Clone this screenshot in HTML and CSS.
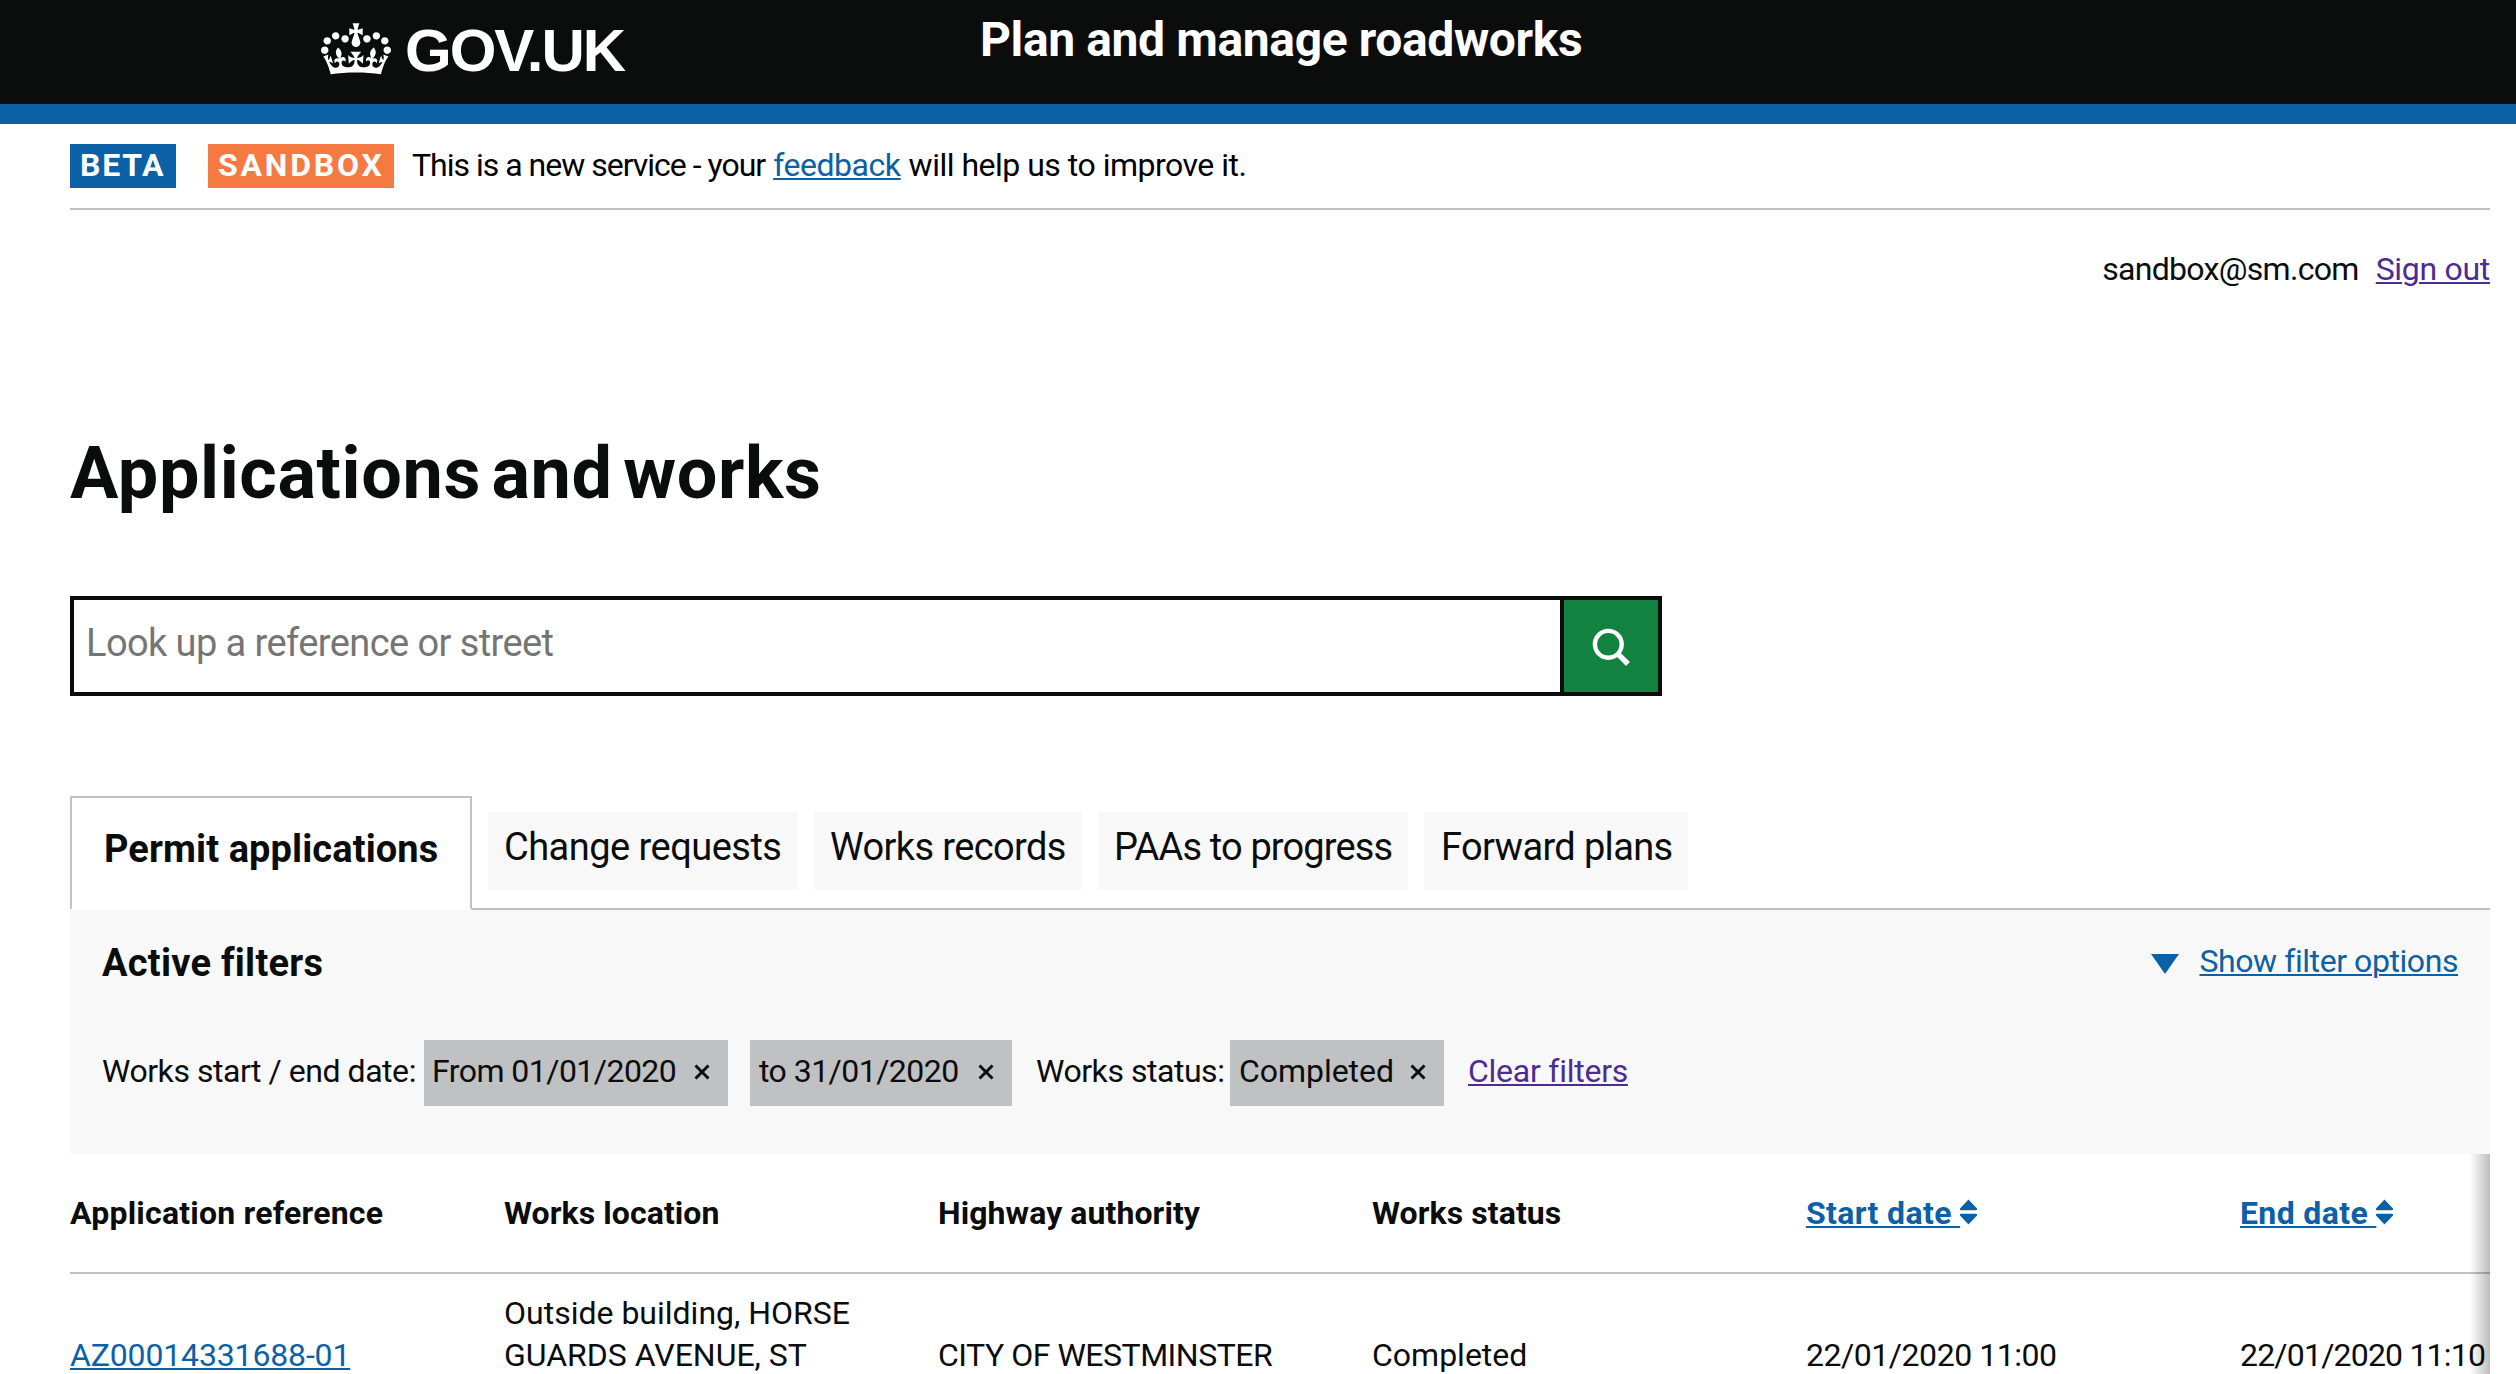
FILE: index.html
```html
<!DOCTYPE html>
<html lang="en">
<head>
<meta charset="utf-8">
<title>Plan and manage roadworks</title>
<link rel="stylesheet" href="styles.css">
</head>
<body>
<header class="header">
  <div class="header__logo">
    <svg class="header__crown" viewBox="0 0 132 97" aria-hidden="true"><path fill="currentColor" fill-rule="evenodd" d="M25 30.2c3.5 1.5 7.7-.2 9.1-3.7 1.5-3.6-.2-7.8-3.9-9.2-3.6-1.4-7.6.3-9.1 3.9-1.4 3.5.3 7.5 3.9 9zM9 39.5c3.6 1.5 7.8-.2 9.2-3.7 1.5-3.6-.2-7.8-3.9-9.1-3.6-1.5-7.6.2-9.1 3.8-1.4 3.5.3 7.5 3.8 9zM4.4 57.2c3.5 1.5 7.7-.2 9.1-3.8 1.5-3.6-.2-7.7-3.9-9.1-3.5-1.5-7.6.3-9.1 3.8-1.4 3.5.3 7.6 3.9 9.1zm38.3-21.4c3.5 1.5 7.7-.2 9.1-3.8 1.5-3.6-.2-7.7-3.9-9.1-3.6-1.5-7.6.3-9.1 3.8-1.3 3.6.4 7.7 3.9 9.1zm64.4-5.6c-3.6 1.5-7.8-.2-9.1-3.7-1.5-3.6.2-7.8 3.8-9.2 3.6-1.4 7.7.3 9.2 3.9 1.3 3.5-.4 7.5-3.9 9zm15.9 9.3c-3.6 1.5-7.7-.2-9.1-3.7-1.5-3.6.2-7.8 3.7-9.1 3.6-1.5 7.7.2 9.2 3.8 1.5 3.5-.3 7.5-3.8 9zm4.7 17.7c-3.6 1.5-7.8-.2-9.2-3.8-1.5-3.6.2-7.7 3.9-9.1 3.6-1.5 7.7.3 9.2 3.8 1.3 3.5-.4 7.6-3.9 9.1zM89.3 35.8c-3.6 1.5-7.8-.2-9.2-3.8-1.4-3.6.2-7.7 3.9-9.1 3.6-1.5 7.7.3 9.2 3.8 1.4 3.6-.3 7.7-3.9 9.1zM69.7 17.7l8.9 4.7V9.3l-8.9 2.8c-.2-.3-.5-.6-.9-.9L72.4 0H59.6l3.5 11.2c-.3.3-.6.5-.9.9l-8.8-2.8v13.1l8.8-4.7c.3.3.6.7.9.9l-5 15.4v.1c-.2.8-.4 1.6-.4 2.4 0 4.1 3.1 7.5 7 8.1h.2c.3 0 .7.1 1 .1.4 0 .7 0 1-.1h.2c4-.6 7.1-4.1 7.1-8.1 0-.8-.1-1.7-.4-2.4V34l-5.1-15.4c.4-.2.7-.6 1-.9zM66 92.8c16.900 0 32.800 1.100 47.100 3.200 4-16.900 8.900-26.700 14-33.500l-9.600-3.400c1 4.900 1.100 7.200 0 10.200-1.500-1.400-3-4.300-4.200-8.700L108.600 76c2.800-2 5-3.200 7.500-3.300-4.400 9.400-10 11.900-13.600 11.200-4.300-.8-6.300-4.600-5.600-7.900 1-4.700 5.700-5.900 8-.5 4.300-8.700-3-11.400-7.600-8.800 7.100-7.200 7.900-13.500 2.100-21.100-8 6.100-8.100 12.300-4.500 20.800-4.700-5.400-12.100-2.500-9.500 6.200 3.400-5.200 7.900-2 7.200 3.100-.6 4.300-6.400 7.800-13.500 7.200-10.300-.9-10.900-8-11.200-13.800 2.500-.5 7.100 1.800 11 7.300L80.200 60c-4.100 4.400-8 5.300-12.300 5.400 1.400-4.400 8-11.600 8-11.600H55.500s6.400 7.200 7.900 11.600c-4.200-.1-8-1-12.300-5.400l1.400 16.400c3.900-5.500 8.500-7.700 10.900-7.300-.3 5.800-.9 12.800-11.100 13.800-7.200.6-12.900-2.900-13.500-7.200-.7-5 3.800-8.300 7.100-3.100 2.700-8.700-4.600-11.600-9.400-6.200 3.700-8.500 3.600-14.700-4.600-20.800-5.800 7.600-5 13.900 2.200 21.100-4.700-2.600-11.900.1-7.700 8.800 2.300-5.500 7.100-4.200 8.100.5.7 3.300-1.300 7.100-5.700 7.900-3.500.7-9-1.800-13.500-11.200 2.500.1 4.700 1.300 7.500 3.300l-4.700-15.400c-1.200 4.400-2.700 7.200-4.300 8.700-1.100-3-.9-5.300 0-10.200l-9.500 3.400c5 6.900 9.900 16.700 14 33.500 14.800-2.100 30.800-3.200 47.700-3.200z"/></svg>
    <span class="header__wordmark">GOV.UK</span>
  </div>
  <div class="header__service">Plan and manage roadworks</div>
</header>

<div class="page">
  <div class="phase">
    <strong class="tag tag--beta">BETA</strong>
    <strong class="tag tag--sandbox">SANDBOX</strong>
    <p class="phase__text"><span class="phase__intro">This is a new service - your</span><a class="link link--tight" href="#">feedback</a><span class="phase__outro">will help us to improve it.</span></p>
  </div>

  <div class="account">
    <span class="account__email">sandbox@sm.com</span>
    <a class="link link--visited account__out" href="#">Sign out</a>
  </div>

  <main>
    <h1 class="title">Applications and works</h1>

    <form class="search">
      <input class="search__input" type="text" placeholder="Look up a reference or street" aria-label="Search">
      <button class="search__button" type="button" aria-label="Search">
        <svg class="search__icon" viewBox="0 0 40 40" aria-hidden="true"><circle cx="16.3" cy="16.3" r="13.4" fill="none" stroke="#fff" stroke-width="4.4"/><path d="M25.8 25.8l10.2 10.2" stroke="#fff" stroke-width="5.4"/></svg>
      </button>
    </form>

    <nav class="tabs">
      <a class="tab tab--active" href="#">Permit applications</a>
      <a class="tab tab--change" href="#">Change requests</a>
      <a class="tab tab--works" href="#">Works records</a>
      <a class="tab tab--paas" href="#">PAAs to progress</a>
      <a class="tab tab--plans" href="#">Forward plans</a>
    </nav>

    <section class="filters">
      <div class="filters__head">
        <h2 class="filters__title">Active filters</h2>
        <div class="filters__toggle">
          <svg class="filters__arrow" viewBox="0 0 28 20" aria-hidden="true"><path d="M0 0h28L14 20z" fill="#0b60a6"/></svg>
          <a class="link filters__show" href="#">Show filter options</a>
        </div>
      </div>
      <div class="filters__row">
        <span class="filters__label">Works start / end date:</span>
        <span class="chip chip--from">From 01/01/2020<svg class="chip__x" viewBox="0 0 16 16"><path d="M1.500 1.500l13 13M14.500 1.500l-13 13"/></svg></span>
        <span class="chip chip--to">to 31/01/2020<svg class="chip__x" viewBox="0 0 16 16"><path d="M1.500 1.500l13 13M14.500 1.500l-13 13"/></svg></span>
        <span class="filters__label">Works status:</span>
        <span class="chip chip--status">Completed<svg class="chip__x" viewBox="0 0 16 16"><path d="M1.500 1.500l13 13M14.500 1.500l-13 13"/></svg></span>
        <a class="link link--visited filters__clear" href="#">Clear filters</a>
      </div>
    </section>

    <div class="results">
      <table class="table">
        <thead>
          <tr>
            <th class="head--reference">Application reference</th>
            <th>Works location</th>
            <th>Highway authority</th>
            <th>Works status</th>
            <th><a class="link sort" href="#">Start date&nbsp;</a><svg class="sort__icon" viewBox="0 0 19 26"><path d="M9.5 .5L18 9.6q.6 1.6-1 1.6H2q-1.600 0-1-1.600zM9.500 25.500L18 16.400q.6-1.600-1-1.600H2q-1.600 0-1 1.600z"/></svg></th>
            <th><a class="link sort" href="#">End date&nbsp;</a><svg class="sort__icon" viewBox="0 0 19 26"><path d="M9.5 .5L18 9.6q.6 1.6-1 1.6H2q-1.600 0-1-1.600zM9.500 25.500L18 16.400q.6-1.600-1-1.600H2q-1.600 0-1 1.600z"/></svg></th>
          </tr>
        </thead>
        <tbody>
          <tr>
            <td class="cell--reference"><a class="link" href="#">AZ00014331688-01</a></td>
            <td>Outside building, HORSE<br>GUARDS AVENUE, ST</td>
            <td class="cell--authority">CITY OF WESTMINSTER</td>
            <td>Completed</td>
            <td class="cell--date">22/01/2020 11:00</td>
            <td class="cell--date cell--end">22/01/2020 11:10</td>
          </tr>
        </tbody>
      </table>
    </div>
  </main>
</div>
</body>
</html>
```
FILE: styles.css
```css
* { box-sizing: border-box; }
html, body { height: 1374px; overflow: hidden; }
body {
  margin: 0;
  background: #fff;
  color: #0b0c0c;
  font: 32px/42px Roboto, "Liberation Sans", sans-serif;
  white-space: nowrap;
}
h1, h2, p { margin: 0; }
svg { display: block; flex: none; }

.link {
  color: #0b60a6;
  text-decoration: underline;
  text-decoration-thickness: 2px;
  text-underline-offset: 2px;
}
.link--visited { color: #4c2c92; }
.link--tight { letter-spacing: -0.45px; }

/* Header */
.header {
  display: flex;
  height: 124px;
  padding-left: 320px;
  background: #0b0c0c;
  border-bottom: 20px solid #0b60a6;
  color: #fff;
}
.header__logo { display: flex; width: 660px; gap: 14px; padding-left: 1px; }
.header__crown { width: 70px; height: 52px; margin-top: 23px; }
.header__wordmark {
  margin-top: 21px;
  font: 700 60px/60px "Liberation Sans", Arial, sans-serif;
  letter-spacing: -2px;
}
.header__service {
  padding-top: 10px;
  font-size: 48px;
  font-weight: 700;
  line-height: 60px;
  letter-spacing: -0.38px;
}

.page { padding: 0 26px 0 70px; }

/* Phase banner */
.phase {
  display: flex;
  padding: 20px 0;
  border-bottom: 2px solid #bfc1c3;
  color: #000;
}
.tag { height: 44px; padding-left: 10px; color: #fff; }
.tag--beta { width: 106px; margin-right: 32px; background: #0b60a6; letter-spacing: 1.74px; }
.tag--sandbox { width: 186px; margin-right: 18px; background: #f47a42; letter-spacing: 2.8px; }
.phase__text { display: flex; gap: 8px; }
.phase__intro { letter-spacing: -1px; }
.phase__outro { letter-spacing: -0.5px; }

.account { display: flex; justify-content: flex-end; gap: 17px; padding-top: 38px; }
.account__email { letter-spacing: -0.7px; }
.account__out { letter-spacing: -0.3px; }

.title {
  margin-top: 144px;
  font-size: 72px;
  font-weight: 700;
  line-height: 80px;
  letter-spacing: 0.6px;
  word-spacing: -8px;
}

/* Search */
.search {
  display: flex;
  width: 1592px;
  height: 100px;
  margin-top: 82px;
  border: 4px solid #0b0c0c;
}
.search__input {
  flex: 1;
  height: 86px;
  padding: 0 12px;
  border: 0;
  background: transparent;
  font: 38px/86px Roboto, sans-serif;
  letter-spacing: -0.58px;
}
.search__input::placeholder { color: #757575; opacity: 1; }
.search__button {
  display: flex;
  width: 98px;
  padding: 28px 0 0 28px;
  border: 0;
  border-left: 4px solid #0b0c0c;
  background: #11823f;
}
.search__icon { width: 40px; height: 40px; }

/* Tabs */
.tabs {
  display: flex;
  align-items: flex-start;
  gap: 16px;
  height: 114px;
  margin-top: 100px;
  border-bottom: 2px solid #bfc1c3;
}
.tab {
  height: 78px;
  margin-top: 16px;
  padding: 10px 0 0 16px;
  background: #f8f8f8;
  color: #0b0c0c;
  font-size: 38px;
  line-height: 50px;
  text-decoration: none;
}
.tab--active {
  width: 402px;
  height: 114px;
  margin-top: 0;
  padding: 26px 0 0 32px;
  border: 2px solid #bfc1c3;
  border-bottom-color: #fff;
  background: #fff;
  font-weight: 700;
  letter-spacing: 0.1px;
}
.tab--change { width: 310px; letter-spacing: -0.52px; }
.tab--works { width: 268px; letter-spacing: -0.62px; }
.tab--paas { width: 310px; letter-spacing: -0.85px; }
.tab--plans { width: 264px; padding-left: 17px; letter-spacing: -0.65px; }

/* Filters */
.filters { height: 244px; padding: 28px 32px 0; background: #f8f8f8; }
.filters__head { display: flex; justify-content: space-between; height: 102px; }
.filters__title { font-size: 38px; line-height: 50px; letter-spacing: 0.25px; }
.filters__toggle { display: flex; gap: 20px; padding-top: 2px; }
.filters__arrow { width: 28px; height: 20px; margin-top: 14px; }
.filters__show { letter-spacing: -0.43px; }
.filters__row {
  display: grid;
  grid-template-columns: 322px 326px 286px 194px 238px auto;
  line-height: 42px;
}
.filters__label, .filters__clear { padding-top: 10px; letter-spacing: -0.46px; }
.filters__clear { letter-spacing: -0.25px; justify-self: start; }
.chip {
  display: flex;
  justify-content: space-between;
  height: 66px;
  padding: 10px 18px 0 8px;
  background: #bfc1c3;
  letter-spacing: -0.54px;
}
.chip--from { width: 304px; }
.chip--to { width: 262px; padding-left: 9px; }
.chip--status { width: 214px; padding-left: 9px; letter-spacing: -0.04px; }
.chip__x { width: 16px; height: 16px; margin-top: 14px; }
.chip__x path { stroke: #0b0c0c; stroke-width: 2.9; }

/* Results */
.results { position: relative; overflow: hidden; }
.results::after {
  content: "";
  position: absolute;
  top: 0;
  right: 0;
  bottom: 0;
  width: 20px;
  background: linear-gradient(to right, rgba(0, 0, 0, 0), rgba(0, 0, 0, 0.26));
}
.table { width: 2604px; table-layout: fixed; border-collapse: separate; border-spacing: 0; }
.table th {
  height: 120px;
  padding: 38px 0;
  border-bottom: 2px solid #bfc1c3;
  text-align: left;
  letter-spacing: 0.08px;
}
.table .head--reference { letter-spacing: 0.22px; }
.table td { padding: 18px 0 0; vertical-align: bottom; }
.sort { display: inline-block; letter-spacing: 0.36px; }
.sort__icon { display: inline-block; width: 19px; height: 26px; margin-left: -1px; vertical-align: -1px; fill: #0b60a6; }
.cell--reference { letter-spacing: -0.15px; }
.cell--authority { letter-spacing: -0.48px; }
.cell--date { letter-spacing: -0.46px; }
.cell--end { letter-spacing: -0.8px; }
```
